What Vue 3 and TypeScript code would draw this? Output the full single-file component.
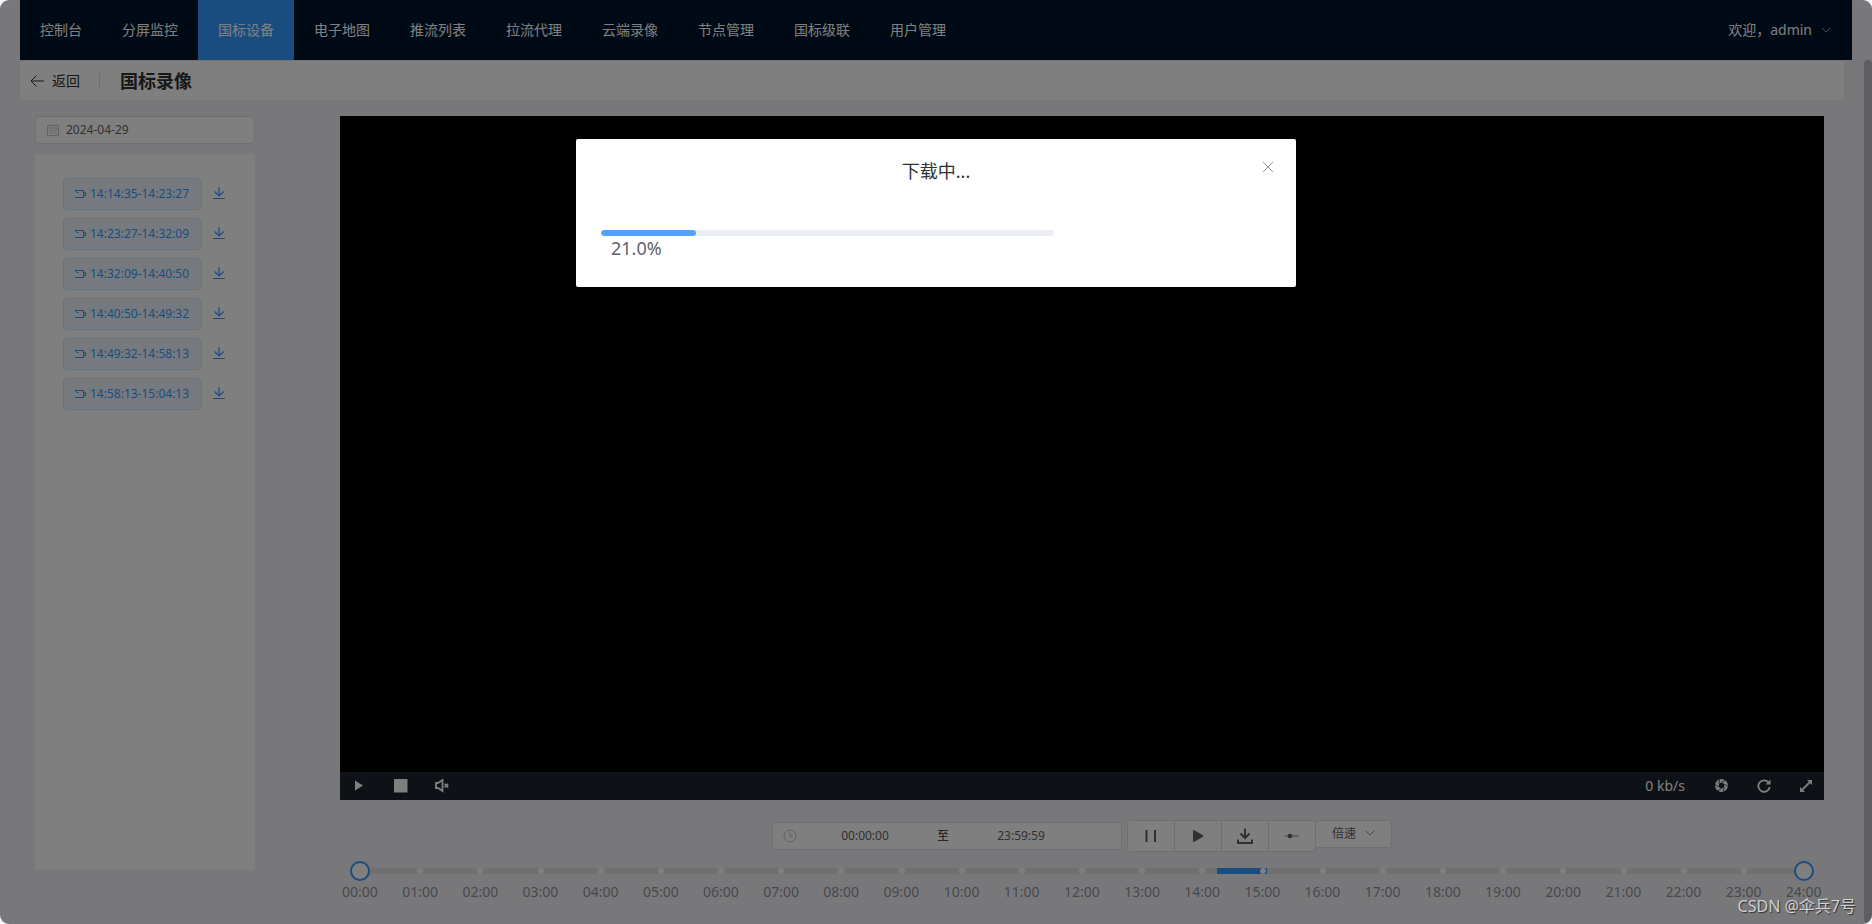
<script setup lang="ts">
import { ref } from 'vue'

const navItems: string[] = ['控制台', '分屏监控', '国标设备', '电子地图', '推流列表', '拉流代理', '云端录像', '节点管理', '国标级联', '用户管理']
const activeNav = ref('国标设备')

const date = ref('2024-04-29')
const startTime = ref('00:00:00')
const endTime = ref('23:59:59')
const speed = ref('')
const rangeStart = ref(0)
const rangeEnd = ref(86400)
const percent = ref(21)
const dialogOpen = ref(true)

const records: string[] = [
  '14:14:35-14:23:27',
  '14:23:27-14:32:09',
  '14:32:09-14:40:50',
  '14:40:50-14:49:32',
  '14:49:32-14:58:13',
  '14:58:13-15:04:13',
]

const hours = Array.from({ length: 25 }, (_, h) => ({
  label: `${String(h).padStart(2, '0')}:00`,
  left: `${(h / 24) * 100}%`,
}))

function seconds(time: string): number {
  const [h, m, s] = time.split(':').map(Number)
  return h * 3600 + m * 60 + s
}

const recorded = {
  left: `${(seconds('14:14:35') / 86400) * 100}%`,
  width: `${((seconds('15:04:13') - seconds('14:14:35')) / 86400) * 100}%`,
}
</script>

<template>
  <div class="shell">
    <header class="topbar">
      <nav class="nav">
        <a
          v-for="item in navItems"
          :key="item"
          href="#"
          class="nav-item"
          :class="{ active: item === activeNav }"
          @click.prevent="activeNav = item"
        >{{ item }}</a>
      </nav>
      <button type="button" class="user">
        欢迎，admin
        <svg class="chevron" viewBox="0 0 12 12"><path d="M2 4l4 4 4-4" /></svg>
      </button>
    </header>

    <section class="page-head">
      <a href="#" class="back" @click.prevent>
        <svg viewBox="0 0 14 14"><path d="M14 7H1M6.500 1.500L1 7l5.500 5.500" /></svg>
        返回
      </a>
      <h1>国标录像</h1>
    </section>

    <main class="content">
      <aside class="side">
        <label class="field date-field">
          <svg class="cal" viewBox="0 0 14 14">
            <path d="M1.500 2.500h11v10h-11zM1.500 5h11M4 1v2M10 1v2M3.500 7.500h2M6.200 7.500h2M9 7.500h2M3.500 10h2M6.200 10h2M9 10h2" />
          </svg>
          <input v-model="date" type="text" aria-label="日期">
        </label>
        <ul class="records">
          <li v-for="record in records" :key="record">
            <button type="button" class="tag">
              <svg viewBox="0 0 12 12"><path d="M1 2.500h8.500v7H1M9.500 4.500h2v3h-2M1.500 2v2M3 4.500h1.500" /></svg>
              {{ record }}
            </button>
            <a href="#" class="download" aria-label="下载" @click.prevent>
              <svg viewBox="0 0 14 14"><path d="M7 0v8.500M2.500 4.500L7 9l4.500-4.500M1 11.500h12" /></svg>
            </a>
          </li>
        </ul>
      </aside>

      <section class="stage">
        <div class="player">
          <div class="screen"></div>
          <div class="bar">
            <div class="bar-group">
              <button type="button" aria-label="播放"><svg viewBox="0 0 14 14"><path class="solid" d="M2 1.500l8 5-8 5z" /></svg></button>
              <button type="button" aria-label="停止"><svg viewBox="0 0 14 14"><path class="solid" d="M0 0h13.500v13.500H0z" /></svg></button>
              <button type="button" aria-label="静音">
                <svg viewBox="0 0 14 14"><path class="line" d="M3 4L7.500 1v11L3 9H1V4zM9.700 4.800l3.400 3.600M13.100 4.800L9.700 8.400" /></svg>
              </button>
            </div>
            <div class="bar-group right">
              <span class="rate">0 kb/s</span>
              <button type="button" aria-label="截图">
                <svg viewBox="0 0 14 14">
                  <circle class="solid" cx="6.500" cy="6.500" r="6.500" />
                  <path class="hole" d="M6.500 3.500l2.600 1.500v3L6.500 9.500 3.900 8v-3z" />
                  <path class="cut" d="M6.500 3.500l4-2.500M9.100 5l3.900 2.500M9.100 8l-.6 4.700M6.500 9.500l-4 2.500M3.900 8L0 5.500M3.900 5l.6-4.700" />
                </svg>
              </button>
              <button type="button" aria-label="刷新">
                <svg viewBox="0 0 14 14"><path class="line" d="M11.500 3.500a5.700 5.700 0 1 0 1.200 4.500" /><path class="solid" d="M13.500.5v5h-5z" /></svg>
              </button>
              <button type="button" aria-label="全屏">
                <svg viewBox="0 0 14 14"><path class="line" d="M3 11l8-8" /><path class="solid" d="M8 1h5v5zM1 8v5h5z" /></svg>
              </button>
            </div>
          </div>
        </div>

        <div class="controls">
          <div class="field range-field">
            <svg class="clock" viewBox="0 0 14 14"><circle cx="7" cy="7" r="6" /><path d="M7 3.500V7.500h3" /></svg>
            <input v-model="startTime" type="text" aria-label="开始时间">
            <span>至</span>
            <input v-model="endTime" type="text" aria-label="结束时间">
          </div>
          <div class="button-group">
            <button type="button" aria-label="暂停"><svg viewBox="0 0 16 16"><path class="solid" d="M2.500 2h2v12h-2zM11 2h2v12h-2z" /></svg></button>
            <button type="button" aria-label="播放"><svg viewBox="0 0 16 16"><path class="solid" d="M3 3q0-1.500 1.400-.8l8.600 5q1 .8 0 1.600l-8.600 5Q3 14.500 3 13z" /></svg></button>
            <button type="button" aria-label="下载"><svg viewBox="0 0 16 16"><path class="line" d="M8 .5v9M3.500 5.500L8 10l4.500-4.500M1 11.500V15h14v-3.500" /></svg></button>
            <button type="button" aria-label="定位"><svg viewBox="0 0 16 16"><path class="rail" d="M1 8h14" /><circle class="solid" cx="6" cy="8" r="2.300" /></svg></button>
          </div>
          <div class="speed">
            <select v-model="speed" aria-label="倍速">
              <option value="">倍速</option>
              <option value="1">1倍速</option>
              <option value="2">2倍速</option>
            </select>
            <svg class="chevron" viewBox="0 0 12 12"><path d="M1.500 3.500L6 8l4.500-4.500" /></svg>
          </div>
        </div>

        <div class="timeline">
          <div class="track">
            <div class="recorded" :style="recorded"></div>
            <i v-for="hour in hours" :key="hour.label" class="stop" :style="{ left: hour.left }"></i>
            <input v-model.number="rangeStart" type="range" min="0" max="86400" aria-label="开始">
            <input v-model.number="rangeEnd" type="range" min="0" max="86400" aria-label="结束">
          </div>
          <div class="labels">
            <span v-for="hour in hours" :key="hour.label">{{ hour.label }}</span>
          </div>
        </div>
      </section>
    </main>

    <div class="scrollbar"></div>

    <div v-if="dialogOpen" class="overlay">
      <div class="dialog" role="dialog" aria-labelledby="dialog-title">
        <button type="button" class="close" aria-label="关闭" @click="dialogOpen = false">
          <svg viewBox="0 0 12 12"><path d="M1 1l10 10M11 1L1 11" /></svg>
        </button>
        <h2 id="dialog-title">下载中...</h2>
        <div class="progress" role="progressbar" :aria-valuenow="percent">
          <div class="progress-fill" :style="{ width: percent + '%' }"></div>
        </div>
        <p>{{ percent.toFixed(1) }}%</p>
      </div>
    </div>
    <div class="watermark">CSDN @伞兵7号</div>
  </div>
</template>

<style>
body {
  margin: 0;
  background: #f5f6fa;
}
</style>

<style scoped>
* {
  box-sizing: border-box;
}

.shell {
  position: relative;
  display: flex;
  flex-direction: column;
  min-height: 100vh;
  padding: 0 20px;
  overflow: hidden;
  border-radius: 9px;
  background: #f0f0f4;
  color: #303133;
  font: 14px/20px "Noto Sans", "Noto Sans CJK SC", sans-serif;
}

button,
input,
select {
  margin: 0;
  padding: 0;
  border: 0;
  background: none;
  color: inherit;
  font: inherit;
}

a {
  color: inherit;
  text-decoration: none;
}

svg {
  display: block;
  flex: none;
  fill: none;
  stroke: currentColor;
}

.solid {
  fill: currentColor;
  stroke: none;
}

.topbar {
  display: flex;
  justify-content: space-between;
  height: 60px;
  background: #001428;
  color: #fff;
}

.nav {
  display: flex;
}

.nav-item {
  padding: 0 20px;
  line-height: 60px;
}

.nav-item.active {
  background: #329aff;
}

.user {
  display: flex;
  align-items: center;
  gap: 8px;
  padding: 0 20px;
}

.chevron {
  width: 12px;
  height: 12px;
  color: #909399;
}

.page-head {
  display: flex;
  align-items: center;
  height: 40px;
  margin-right: 8px;
  border-top: 1px solid #e6e6e8;
  background: #fff;
}

.back {
  display: flex;
  align-items: center;
  gap: 8px;
  padding: 0 19px 0 10px;
}

.back svg {
  width: 14px;
  height: 14px;
}

h1 {
  margin: 0;
  padding-left: 21px;
  font-size: 18px;
  line-height: 24px;
  position: relative;
}

h1::before {
  content: "";
  position: absolute;
  left: 0;
  top: 4px;
  height: 16px;
  border-left: 1px solid #dcdfe6;
}

.content {
  flex: 1;
  display: flex;
  gap: 85px;
  padding: 16px 28px 20px 15px;
}

.side {
  display: flex;
  flex-direction: column;
  gap: 10px;
  width: 220px;
  padding-bottom: 34px;
}

.field {
  display: flex;
  align-items: center;
  height: 28px;
  border: 1px solid #dcdfe6;
  border-radius: 4px;
  background: #fff;
  color: #606266;
  font-size: 12px;
}

.field svg {
  color: #c0c4cc;
}

.date-field {
  gap: 6px;
  padding: 0 10px;
}

.cal {
  width: 14px;
  height: 14px;
}

.date-field input {
  flex: 1;
  min-width: 0;
}

.records {
  flex: 1;
  display: flex;
  flex-direction: column;
  gap: 8px;
  margin: 0;
  padding: 24px 28px;
  background: #fff;
  list-style: none;
}

.records li {
  display: flex;
  align-items: center;
  gap: 10px;
  color: #329aff;
}

.tag {
  display: flex;
  align-items: center;
  gap: 4px;
  width: 139px;
  height: 32px;
  padding: 0 10px;
  border: 1px solid #d0e6fc;
  border-radius: 4px;
  background: #ecf5ff;
  font-size: 12px;
  white-space: nowrap;
}

.tag svg {
  width: 12px;
  height: 12px;
}

.download svg {
  width: 14px;
  height: 14px;
  stroke-width: 1.2;
}

.stage {
  flex: 1;
  display: flex;
  flex-direction: column;
  min-width: 0;
}

.player {
  flex: 1;
  display: flex;
  flex-direction: column;
}

.screen {
  flex: 1;
  background: #000;
}

.bar {
  display: flex;
  justify-content: space-between;
  height: 28px;
  padding: 0 11px 0 13px;
  background: #1c222b;
  color: #fff;
}

.bar-group {
  display: flex;
  align-items: center;
  gap: 27px;
}

.bar-group.right {
  gap: 28px;
}

.rate {
  padding-right: 2px;
}

.bar svg {
  width: 14px;
  height: 14px;
}

.bar .line {
  stroke-width: 1.8;
}

.hole {
  fill: #1c222b;
  stroke: none;
}

.cut {
  stroke: #1c222b;
  stroke-width: .8;
}

.controls {
  display: flex;
  justify-content: center;
  align-items: flex-start;
  margin-top: 20px;
}

.range-field {
  width: 350px;
  margin: 2px 5px 0 0;
  padding: 0 10px;
}

.clock {
  width: 14px;
  height: 14px;
}

.range-field input {
  width: 136px;
  text-align: center;
}

.range-field span {
  width: 20px;
  color: #303133;
  text-align: center;
}

.button-group {
  display: flex;
}

.button-group button {
  display: grid;
  place-items: center;
  width: 48px;
  height: 32px;
  margin-right: -1px;
  border: 1px solid #dcdfe6;
  background: #fff;
  color: #606266;
}

.button-group button:first-child {
  border-radius: 4px 0 0 4px;
}

.button-group button:last-child {
  border-radius: 0 4px 4px 0;
}

.button-group svg {
  width: 16px;
  height: 16px;
  overflow: visible;
}

.button-group .line {
  stroke-width: 2;
}

.rail {
  stroke: #808286;
}

.speed {
  position: relative;
}

.speed select {
  display: block;
  width: 77px;
  height: 28px;
  padding-left: 16px;
  border: 1px solid #dcdfe6;
  border-radius: 3px;
  background: #fff;
  color: #606266;
  font-size: 12px;
  appearance: none;
}

.speed .chevron {
  position: absolute;
  top: 7px;
  right: 16px;
  pointer-events: none;
}

.timeline {
  margin-top: 16px;
  padding: 0 20px;
}

.track {
  position: relative;
  height: 6px;
  background: #e0e0e2;
}

.recorded {
  position: absolute;
  height: 100%;
  background: #329aff;
}

.stop {
  position: absolute;
  width: 6px;
  height: 6px;
  margin-left: -3px;
  border-radius: 50%;
  background: #fff;
}

.track input {
  position: absolute;
  top: -7px;
  left: -10px;
  width: calc(100% + 20px);
  height: 20px;
  appearance: none;
  pointer-events: none;
}

.track input::-webkit-slider-thumb {
  width: 20px;
  height: 20px;
  border: 2px solid #329aff;
  border-radius: 50%;
  background: #fff;
  appearance: none;
  pointer-events: auto;
}

.labels {
  display: flex;
  justify-content: space-between;
  margin: 8px -20px 2px;
  color: #909399;
}

.labels span {
  width: 40px;
  text-align: center;
}

.scrollbar {
  position: absolute;
  top: 60px;
  right: 0;
  bottom: 1px;
  width: 8px;
  border-radius: 4px;
  background: #bcbcc0;
}

.overlay {
  position: absolute;
  inset: 0;
  background: rgba(0, 0, 0, .5);
}

.dialog {
  position: relative;
  width: 720px;
  max-width: 90%;
  margin: 139px auto 0;
  padding: 20px 25px 27px;
  border-radius: 2px;
  background: #fff;
  color: #606266;
}

.dialog h2 {
  margin: 0;
  color: #303133;
  font-size: 18px;
  font-weight: 400;
  line-height: 24px;
  text-align: center;
}

.close {
  position: absolute;
  top: 22px;
  right: 22px;
  color: #909399;
}

.close svg {
  width: 12px;
  height: 12px;
}

.progress {
  width: calc(100% - 217px);
  height: 6px;
  margin-top: 47px;
  overflow: hidden;
  border-radius: 3px;
  background: #ebeef5;
}

.progress-fill {
  height: 100%;
  border-radius: 3px;
  background: #4fa3ff;
}

.dialog p {
  margin: 0;
  padding-left: 10px;
  font-size: 18px;
  line-height: 24px;
}

.watermark {
  position: absolute;
  right: 16px;
  bottom: 6px;
  color: #d0d0d2;
  font-size: 16px;
  line-height: 24px;
  text-shadow: 1px 1px 1px #303030;
}
</style>
